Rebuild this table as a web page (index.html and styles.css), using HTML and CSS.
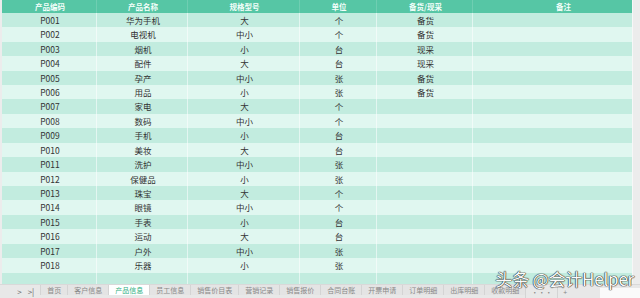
FILE: index.html
```html
<!DOCTYPE html>
<html lang="zh">
<head>
<meta charset="utf-8">
<link rel="stylesheet" href="styles.css">
</head>
<body>
<div class="page">
  <div class="sheet">
    <div class="grid">
      <div class="row head"><div>产品编码</div><div>产品名称</div><div>规格型号</div><div>单位</div><div>备货/现采</div><div class="note">备注</div></div>
      <div class="row"><div>P001</div><div>华为手机</div><div>大</div><div>个</div><div>备货</div><div></div></div>
      <div class="row"><div>P002</div><div>电视机</div><div>中小</div><div>个</div><div>备货</div><div></div></div>
      <div class="row"><div>P003</div><div>烟机</div><div>小</div><div>台</div><div>现采</div><div></div></div>
      <div class="row"><div>P004</div><div>配件</div><div>大</div><div>台</div><div>现采</div><div></div></div>
      <div class="row"><div>P005</div><div>孕产</div><div>中小</div><div>张</div><div>备货</div><div></div></div>
      <div class="row"><div>P006</div><div>用品</div><div>小</div><div>张</div><div>备货</div><div></div></div>
      <div class="row"><div>P007</div><div>家电</div><div>大</div><div>个</div><div></div><div></div></div>
      <div class="row"><div>P008</div><div>数码</div><div>中小</div><div>个</div><div></div><div></div></div>
      <div class="row"><div>P009</div><div>手机</div><div>小</div><div>台</div><div></div><div></div></div>
      <div class="row"><div>P010</div><div>美妆</div><div>大</div><div>台</div><div></div><div></div></div>
      <div class="row"><div>P011</div><div>洗护</div><div>中小</div><div>张</div><div></div><div></div></div>
      <div class="row"><div>P012</div><div>保健品</div><div>小</div><div>张</div><div></div><div></div></div>
      <div class="row"><div>P013</div><div>珠宝</div><div>大</div><div>个</div><div></div><div></div></div>
      <div class="row"><div>P014</div><div>眼镜</div><div>中小</div><div>个</div><div></div><div></div></div>
      <div class="row"><div>P015</div><div>手表</div><div>小</div><div>台</div><div></div><div></div></div>
      <div class="row"><div>P016</div><div>运动</div><div>大</div><div>台</div><div></div><div></div></div>
      <div class="row"><div>P017</div><div>户外</div><div>中小</div><div>张</div><div></div><div></div></div>
      <div class="row"><div>P018</div><div>乐器</div><div>小</div><div>张</div><div></div><div></div></div>
      <div class="row"><div></div><div></div><div></div><div></div><div></div><div></div></div>
    </div>
  </div>
  <div class="tabbar">
    <div class="nav"><span>&gt;</span><span>&gt;|</span></div>
    <div class="tab">首页</div>
    <div class="tab">客户信息</div>
    <div class="tab active">产品信息</div>
    <div class="tab">员工信息</div>
    <div class="tab">销售价目表</div>
    <div class="tab">营销记录</div>
    <div class="tab">销售报价</div>
    <div class="tab">合同台账</div>
    <div class="tab">开票申请</div>
    <div class="tab">订单明细</div>
    <div class="tab">出库明细</div>
    <div class="tab">收款明细</div>
    <div class="more">···</div>
    <div class="more">+</div>
    <div class="scroll"></div>
  </div>
  <div class="watermark">头条 @会计Helper</div>
</div>
</body>
</html>
```
FILE: styles.css
```css
* { box-sizing: border-box; }
html, body { margin: 0; padding: 0; }
body {
  width: 640px;
  height: 298px;
  overflow: hidden;
  background: #eeeeee;
  font-family: "Noto Sans CJK SC", "Liberation Sans", sans-serif;
}
.page {
  position: relative;
  width: 640px;
  height: 298px;
  display: flex;
  flex-direction: column;
}
.sheet {
  height: 284px;
  overflow: hidden;
  padding-left: 2px;
  background: #ececec;
}
.grid {
  width: 631px;
  border-right: 1px solid #f7f7f7;
}
.row {
  display: grid;
  grid-template-columns: 95px 91px 112px 77px 96px 159px;
  height: 14.45px;
  font-size: 8.5px;
  color: #333;
  background: #c2ecdf;
}
.row:nth-child(odd) { background: #e0f7f0; }
.row:nth-child(even) { background: #c2ecdf; }
.row > div {
  display: flex;
  align-items: center;
  justify-content: center;
  border-right: 1px solid rgba(255,255,255,0.55);
  white-space: nowrap;
  line-height: 1;
  padding-left: 2px;
}
.row > div:last-child { border-right: none; }
.row.head {
  height: 12.8px;
  background: #56c6a5;
  color: #f4fffb;
  font-size: 7.5px;
  font-weight: bold;
}
.row.head > div { border-right-color: rgba(255,255,255,0.15); }
.row.head .note { padding-left: 22px; }
.tabbar {
  flex: 1;
  display: flex;
  align-items: stretch;
  background: #e8e8e8;
  border-top: 1px solid #d9d9d9;
  font-size: 7px;
  color: #888;
}
.nav {
  width: 43px;
  display: flex;
  align-items: center;
  justify-content: flex-end;
  gap: 6px;
  padding-right: 6px;
  font-size: 8px;
  color: #666;
}
.tab {
  display: flex;
  align-items: center;
  padding: 0 6px;
  border-left: 1px solid #d4d4d4;
  white-space: nowrap;
  margin-bottom: 3px;
  background: #e4e4e4;
}
.tab.active {
  background: #ffffff;
  color: #2fb07f;
}
.more {
  display: flex;
  align-items: center;
  padding: 0 5px;
  border-left: 1px solid #d4d4d4;
  color: #888;
}
.scroll {
  width: 43px;
  margin: 3px 0 0 28px;
  background: #fafafa;
}
.watermark {
  position: absolute;
  right: 6px;
  top: 268px;
  font-family: "Noto Sans CJK SC", "Liberation Sans", sans-serif;
  font-size: 17px;
  line-height: 22px;
  color: #fbfbfb;
  text-shadow: 0 0 1px #222, 0 0 1px #222, 0 0 1px #222;
  letter-spacing: -0.2px;
}
```
